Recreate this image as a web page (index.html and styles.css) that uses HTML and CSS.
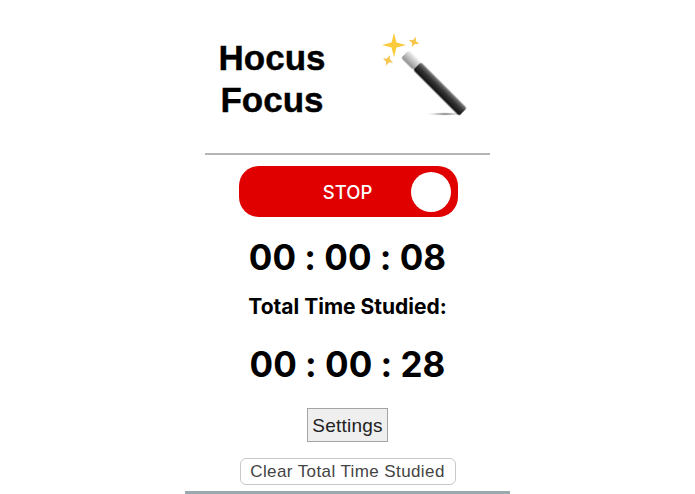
FILE: index.html
```html
<!DOCTYPE html>
<html lang="en">
<head>
    <meta charset="UTF-8">
    <title>Hocus Focus</title>
    <link rel="stylesheet" href="styles.css">
</head>
<body>
    <div class="popup">
        <div class="brand">
            <h1>Hocus<br>Focus</h1>
            <svg class="wand" width="100" height="96" viewBox="0 0 100 96">
                <defs>
                    <linearGradient id="shaft" x1="0" y1="0" x2="0" y2="1">
                        <stop offset="0" stop-color="#808080"/>
                        <stop offset="0.45" stop-color="#333"/>
                        <stop offset="1" stop-color="#111"/>
                    </linearGradient>
                    <linearGradient id="tip" x1="0" y1="0" x2="0" y2="1">
                        <stop offset="0" stop-color="#f0f0f0"/>
                        <stop offset="1" stop-color="#8d8d8d"/>
                    </linearGradient>
                    <radialGradient id="shadow">
                        <stop offset="0" stop-color="#555"/>
                        <stop offset="1" stop-color="#fff" stop-opacity="0"/>
                    </radialGradient>
                    <filter id="soft">
                        <feGaussianBlur stdDeviation="0.5"/>
                    </filter>
                </defs>
                <ellipse cx="68" cy="88" rx="21" ry="2" fill="url(#shadow)"/>
                <g transform="translate(28 28) rotate(45)" filter="url(#soft)">
                    <rect x="0" y="-5.500" width="17" height="11" rx="2" fill="url(#tip)"/>
                    <rect x="17" y="-5.500" width="65" height="11" rx="2" fill="url(#shaft)"/>
                </g>
                <g filter="url(#soft)">
                    <path d="M17 7 L19.500 16.500 L29 19 L19.500 21.500 L17 31 L14.500 21.500 L5 19 L14.500 16.500 Z" fill="#f9cb3c"/>
                    <path d="M37 10.500 L38.500 14.500 L42.500 16 L38.500 17.500 L37 21.500 L35.500 17.500 L31.500 16 L35.500 14.500 Z" fill="#f6c650" transform="rotate(20 37 16)"/>
                    <path d="M11 29 L12.500 33 L16.500 34.500 L12.500 36 L11 40 L9.500 36 L5.500 34.500 L9.500 33 Z" fill="#f6c650" transform="rotate(20 11 34.500)"/>
                </g>
            </svg>
        </div>
        <hr class="divider">
        <div class="toggle">
            <span class="toggle-label">STOP</span>
            <span class="knob"></span>
        </div>
        <div class="time">00 : 00 : 08</div>
        <div class="total-label">Total Time Studied:</div>
        <div class="time total">00 : 00 : 28</div>
        <button class="settings-btn">Settings</button>
        <button class="clear-btn">Clear Total Time Studied</button>
    </div>
</body>
</html>
```

FILE: styles.css
```css
body {
    margin: 0;
    background-color: #fff;
    font-family: "Liberation Sans", Arial, sans-serif;
    color: #000;
}
.popup {
    width: 325px;
    height: 494px;
    margin: 0 auto;
    box-sizing: border-box;
    border-bottom: 3px solid #9aa9ae;
    display: flex;
    flex-direction: column;
    align-items: center;
    overflow: hidden;
}
.brand {
    width: 285px;
    height: 153px;
    display: flex;
    flex-shrink: 0;
}
.brand h1 {
    width: 134px;
    margin: 37px 0 0 0;
    font-size: 35px;
    line-height: 42px;
    font-weight: bold;
    text-align: center;
    -webkit-text-stroke: 0.4px #000;
}
.wand {
    margin: 26px 0 0 38px;
}
.divider {
    width: 285px;
    height: 2px;
    flex-shrink: 0;
    margin: 0 0 11px 0;
    border: none;
    background-color: #b5b5b5;
}
.toggle {
    width: 219px;
    height: 51px;
    flex-shrink: 0;
    margin-left: 2px;
    position: relative;
    display: flex;
    align-items: center;
    justify-content: center;
    background-color: #e00000;
    border-radius: 20px;
}
.toggle-label {
    margin-left: -2px;
    color: #fff;
    font-family: "Inter", sans-serif;
    font-size: 18.500px;
    font-weight: 500;
}
.knob {
    position: absolute;
    top: 6px;
    right: 7px;
    width: 40px;
    height: 40px;
    background-color: #fff;
    border-radius: 50%;
}
.time {
    margin-top: 19px;
    font-family: "Inter", sans-serif;
    font-feature-settings: "calt" 0;
    font-size: 35px;
    line-height: 42px;
    font-weight: 700;
    white-space: nowrap;
}
.total-label {
    margin-top: 17px;
    font-family: "Inter", sans-serif;
    font-size: 21px;
    line-height: 24px;
    font-weight: 700;
    white-space: nowrap;
}
.time.total {
    margin-top: 24px;
}
.settings-btn {
    width: 81px;
    height: 34px;
    flex-shrink: 0;
    margin-top: 23px;
    padding: 1px 0 0 0;
    background-color: #efefef;
    border: 1px solid #a4a4a4;
    font-family: "Liberation Sans", Arial, sans-serif;
    font-size: 19px;
    letter-spacing: 0.2px;
    color: #222;
}
.clear-btn {
    width: 216px;
    height: 27px;
    flex-shrink: 0;
    margin-top: 16px;
    padding: 0;
    background-color: #fff;
    border: 1px solid #c8c8c8;
    border-radius: 6px;
    font-family: "Liberation Sans", Arial, sans-serif;
    font-size: 17px;
    letter-spacing: 0.4px;
    color: #444;
}
```
